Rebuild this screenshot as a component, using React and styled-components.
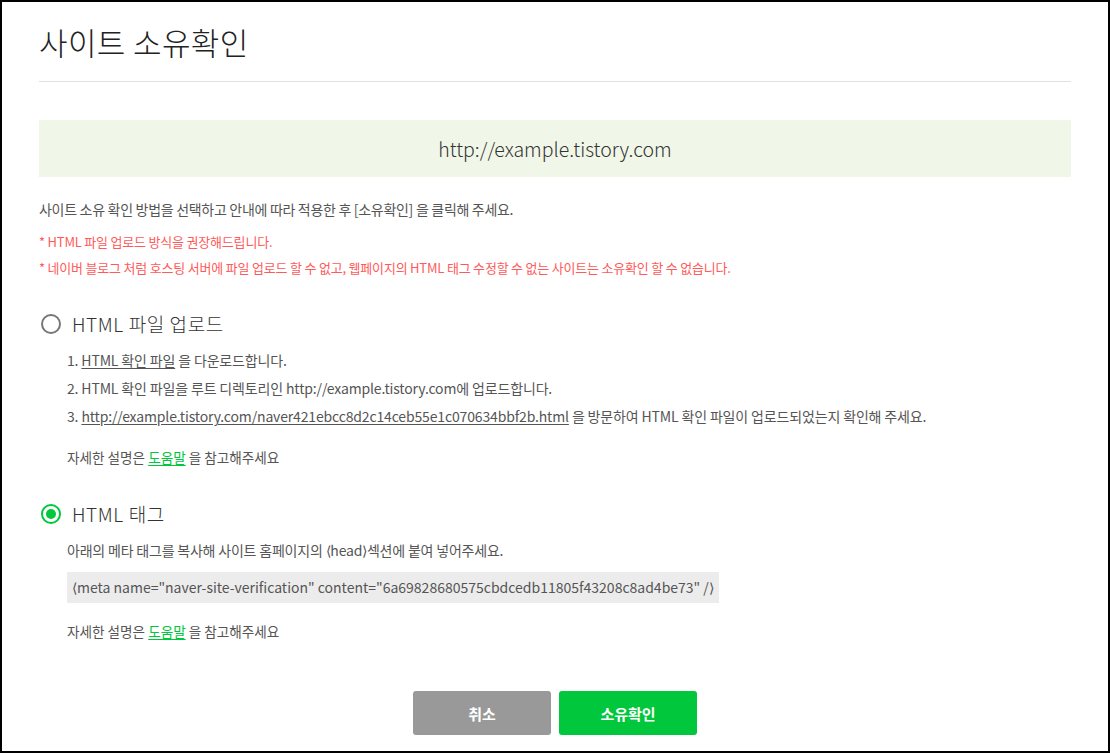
import styled, { createGlobalStyle } from "styled-components";

const GlobalStyle = createGlobalStyle`
  html, body {
    margin: 0;
    padding: 0;
    background: #fff;
  }
  body {
    font-family: "Noto Sans CJK KR", "Noto Sans", sans-serif;
  }
`;

function Radio({ checked, children }) {
  return (
    <RadioRow>
      <RadioMark $checked={checked} />
      <RadioLabel>{children}</RadioLabel>
    </RadioRow>
  );
}

function App() {
  return (
    <>
      <GlobalStyle />
      <Frame>
        <Header>
          <Title>사이트 소유확인</Title>
        </Header>

        <SiteBox>http://example.tistory.com</SiteBox>

        <Desc>
          사이트 소유 확인 방법을 선택하고 안내에 따라 적용한 후 [소유확인] 을
          클릭해 주세요.
        </Desc>

        <Notice>
          <li>* HTML 파일 업로드 방식을 권장해드립니다.</li>
          <li>
            * 네이버 블로그 처럼 호스팅 서버에 파일 업로드 할 수 없고,
            웹페이지의 HTML 태그 수정할 수 없는 사이트는 소유확인 할 수
            없습니다.
          </li>
        </Notice>

        <Method $top={32}>
          <Radio>HTML 파일 업로드</Radio>
          <Steps>
            <li>
              1. <u>HTML 확인 파일</u> 을 다운로드합니다.
            </li>
            <li>
              2. HTML 확인 파일을 루트 디렉토리인 http://example.tistory.com에
              업로드합니다.
            </li>
            <li>
              3.{" "}
              <u>
                http://example.tistory.com/naver421ebcc8d2c14ceb55e1c070634bbf2b.html
              </u>{" "}
              을 방문하여 HTML 확인 파일이 업로드되었는지 확인해 주세요.
            </li>
          </Steps>
          <Help $top={17}>
            자세한 설명은 <HelpLink>도움말</HelpLink> 을 참고해주세요
          </Help>
        </Method>

        <Method $top={33}>
          <Radio checked>HTML 태그</Radio>
          <Guide>
            아래의 메타 태그를 복사해 사이트 홈페이지의 ⟨head⟩섹션에 붙여
            넣어주세요.
          </Guide>
          <Code>
            ⟨meta name="naver-site-verification"
            content="6a69828680575cbdcedb11805f43208c8ad4be73" /⟩
          </Code>
          <Help $top={18}>
            자세한 설명은 <HelpLink>도움말</HelpLink> 을 참고해주세요
          </Help>
        </Method>

        <Buttons>
          <Button>취소</Button>
          <Button $primary>소유확인</Button>
        </Buttons>
      </Frame>
    </>
  );
}

const Frame = styled.div`
  box-sizing: border-box;
  width: 1110px;
  height: 753px;
  border: 2px solid #000;
  padding: 20px 37px 0;
  display: flex;
  flex-direction: column;
  overflow: hidden;
`;

const Header = styled.div`
  padding-bottom: 19px;
  border-bottom: 1px solid #e1e1e1;
`;

const Title = styled.h1`
  margin: 0;
  font-size: 31px;
  font-weight: 300;
  line-height: 40px;
  color: #222;
  letter-spacing: 0.4px;
`;

const SiteBox = styled.div`
  margin-top: 38px;
  height: 57px;
  line-height: 57px;
  background: #f0f7e8;
  text-align: center;
  font-size: 19.5px;
  font-weight: 300;
  color: #333;
`;

const Desc = styled.p`
  margin: 22px 0 0;
  font-size: 14px;
  line-height: 20px;
  color: #555;
  letter-spacing: -0.3px;
`;

const Notice = styled.ul`
  margin: 13px 0 0;
  padding: 0;
  list-style: none;
  display: flex;
  flex-direction: column;
  gap: 6px;

  li {
    font-size: 13px;
    line-height: 20px;
    color: #ff5a5a;
    letter-spacing: -0.2px;
  }
`;

const Method = styled.section`
  margin-top: ${({ $top }) => $top}px;
  display: flex;
  flex-direction: column;
  align-items: flex-start;
`;

const RadioRow = styled.label`
  display: flex;
  align-items: center;
  gap: 11px;
  height: 28px;
  padding-left: 2px;
`;

const RadioMark = styled.span`
  box-sizing: border-box;
  width: 20px;
  height: 20px;
  border-radius: 50%;
  border: 2px solid ${({ $checked }) => ($checked ? "#00c73c" : "#777")};
  display: flex;
  align-items: center;
  justify-content: center;

  &::after {
    content: "";
    display: ${({ $checked }) => ($checked ? "block" : "none")};
    width: 10px;
    height: 10px;
    border-radius: 50%;
    background: #00c73c;
  }
`;

const RadioLabel = styled.span`
  font-size: 19px;
  font-weight: 300;
  line-height: 28px;
  color: #333;
  letter-spacing: 0.6px;
`;

const Steps = styled.ol`
  margin: 8px 0 0;
  padding: 0 0 0 28px;
  list-style: none;

  li {
    font-size: 14px;
    line-height: 28px;
    color: #555;
    letter-spacing: -0.15px;
  }

  u {
    text-underline-offset: 2px;
  }
`;

const Help = styled.p`
  margin: ${({ $top }) => $top}px 0 0;
  padding-left: 28px;
  font-size: 13.6px;
  line-height: 20px;
  color: #555;
`;

const HelpLink = styled.a`
  color: #00c73c;
  text-decoration: underline;
  text-underline-offset: 2px;
`;

const Guide = styled.p`
  margin: 12px 0 0;
  padding-left: 28px;
  font-size: 14px;
  line-height: 20px;
  color: #555;
  letter-spacing: -0.2px;
`;

const Code = styled.div`
  margin: 12px 0 0 28px;
  height: 31px;
  line-height: 31px;
  padding: 0 5px;
  background: #ececec;
  font-size: 14px;
  color: #555;
  white-space: nowrap;
`;

const Buttons = styled.div`
  margin-top: 50px;
  display: flex;
  justify-content: center;
  gap: 8px;
`;

const Button = styled.button`
  width: 138px;
  height: 44px;
  border: none;
  border-radius: 3px;
  background: ${({ $primary }) => ($primary ? "#00c73c" : "#999")};
  color: #fff;
  font-family: inherit;
  font-size: 15px;
  font-weight: 700;
  cursor: pointer;
`;

export default App;
